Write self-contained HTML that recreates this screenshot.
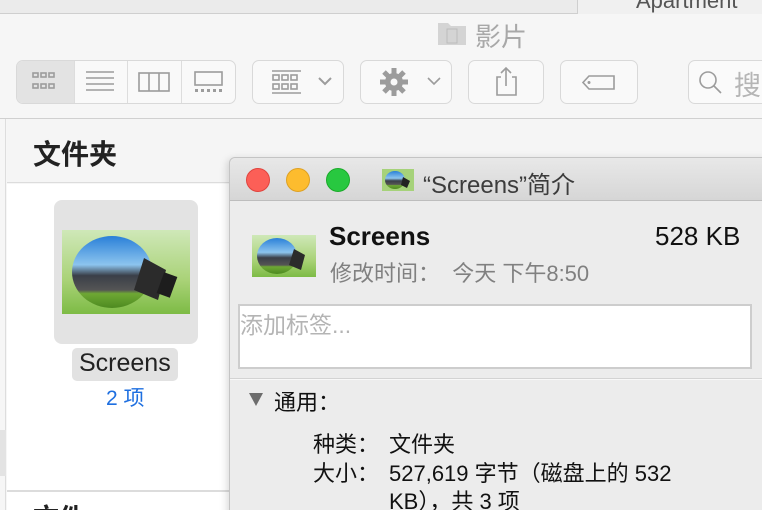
<!DOCTYPE html>
<html><head><meta charset="utf-8"><style>
*{margin:0;padding:0;box-sizing:border-box}
html,body{width:762px;height:510px;overflow:hidden}
body{position:relative;background:#f6f6f6;font-family:"Liberation Sans","Noto Sans CJK SC",sans-serif}
.a{position:absolute}
.btn{position:absolute;top:60px;height:44px;border:1px solid #d9d9d9;border-radius:7px;background:#f9f9f9}
.g{stroke:#9c9c9c;fill:none;stroke-width:1.6}
.t{position:absolute;white-space:nowrap}
</style></head><body>
<div class="a" style="left:0;top:0;width:762px;height:14px;background:#ebebeb;border-bottom:1px solid #cfcfcf"></div>
<div class="a" style="left:577px;top:0;width:1px;height:14px;background:#cfcfcf"></div>
<div class="a" style="left:578px;top:0;width:184px;height:14px;background:#f0f0f0;overflow:hidden"><div class="t" style="left:58px;top:-12px;font-size:22px;color:#555">Apartment</div></div>
<svg class="a" style="left:437px;top:20px" width="30" height="26"><path d="M1 3h10l3 3h15v19H1z" fill="#d4d4d4"/><rect x="10" y="9" width="10" height="14" fill="none" stroke="#bbb"/></svg>
<div class="t" style="left:475px;top:17px;font-size:26px;color:#a8a8a8">影片</div>
<div class="btn" style="left:16px;width:220px;overflow:hidden">
<div class="a" style="left:0;top:0;width:57px;height:44px;background:#e3e3e3"></div>
<div class="a" style="left:57px;top:0;width:1px;height:44px;background:#ddd"></div>
<div class="a" style="left:110px;top:0;width:1px;height:44px;background:#ddd"></div>
<div class="a" style="left:164px;top:0;width:1px;height:44px;background:#ddd"></div>
</div>
<svg class="a" style="left:16px;top:60px" width="220" height="44">
<g class="g" stroke-width="1.4"><rect x="17" y="13" width="5" height="4"/><rect x="25" y="13" width="5" height="4"/><rect x="33" y="13" width="5" height="4"/><rect x="17" y="24" width="5" height="4"/><rect x="25" y="24" width="5" height="4"/><rect x="33" y="24" width="5" height="4"/>
<path d="M70 12h28M70 18h28M70 24h28M70 30h28"/>
<rect x="123" y="13" width="30" height="18"/><path d="M133 13v18M143 13v18"/>
<rect x="179" y="12" width="27" height="13"/></g>
<g fill="#9c9c9c"><rect x="179" y="29" width="3" height="3"/><rect x="185" y="29" width="3" height="3"/><rect x="191" y="29" width="3" height="3"/><rect x="197" y="29" width="3" height="3"/><rect x="203" y="29" width="3" height="3"/></g>
</svg>
<div class="btn" style="left:252px;width:92px"></div>
<svg class="a" style="left:252px;top:60px" width="92" height="44"><g class="g" stroke-width="1.4"><path d="M20 11h29M20 33h29"/><rect x="21" y="15" width="6" height="5"/><rect x="30" y="15" width="6" height="5"/><rect x="39" y="15" width="6" height="5"/><rect x="21" y="24" width="6" height="5"/><rect x="30" y="24" width="6" height="5"/><rect x="39" y="24" width="6" height="5"/><path d="M67 18l6 6 6-6" stroke-width="2"/></g></svg>
<div class="btn" style="left:360px;width:92px"></div>
<svg class="a" style="left:360px;top:60px" width="92" height="44"><g fill="#9c9c9c"><circle cx="34" cy="22" r="9"/><g stroke="#9c9c9c" stroke-width="5"><path d="M34 8v28M20 22h28M24 12l20 20M44 12L24 32"/></g></g><circle cx="34" cy="22" r="3.5" fill="#f9f9f9"/><path class="g" stroke-width="2" d="M68 18l6 6 6-6"/></svg>
<div class="btn" style="left:468px;width:76px"></div>
<svg class="a" style="left:468px;top:60px" width="76" height="44"><path class="g" d="M33 17h-4v18h19V17h-4M38 8v18M33 13l5-5 5 5"/></svg>
<div class="btn" style="left:560px;width:78px"></div>
<svg class="a" style="left:560px;top:60px" width="78" height="44"><path class="g" d="M29 16h25v13H29l-6-6.5z"/><circle cx="29" cy="22.5" r="1.5" fill="#9c9c9c"/></svg>
<div class="btn" style="left:688px;width:90px;background:#fafafa"></div>
<svg class="a" style="left:696px;top:68px" width="30" height="30"><circle cx="12" cy="12" r="8" class="g" stroke-width="1.8"/><path d="M18 18l7 7" class="g" stroke-width="2"/></svg>
<div class="t" style="left:734px;top:64px;font-size:27px;color:#b5b5b5">搜</div>
<div class="a" style="left:0;top:118px;width:762px;height:1px;background:#d0d0d0"></div>
<div class="a" style="left:0;top:119px;width:6px;height:391px;background:#f6f6f6;border-right:1px solid #ddd"></div>
<div class="a" style="left:0;top:430px;width:6px;height:46px;background:#e3e3e3"></div>
<div class="a" style="left:7px;top:119px;width:755px;height:64px;background:#f5f5f5;border-bottom:1px solid #dcdcdc"></div>
<div class="t" style="left:33px;top:133px;font-size:28px;font-weight:bold;color:#222">文件夹</div>
<div class="a" style="left:7px;top:184px;width:755px;height:306px;background:#fff"></div>
<div class="a" style="left:7px;top:490px;width:755px;height:2px;background:#dcdcdc"></div>
<div class="a" style="left:7px;top:492px;width:755px;height:18px;background:#fff"></div>
<div class="a" style="left:54px;top:200px;width:144px;height:144px;background:#e3e3e3;border-radius:8px"></div>
<svg class="a" style="left:62px;top:230px" width="128" height="84"><defs><linearGradient id="s" x1="0" y1="0" x2="0" y2="1"><stop offset="0" stop-color="#cfe8b8"/><stop offset=".6" stop-color="#a9d277"/><stop offset="1" stop-color="#7dbb45"/></linearGradient><linearGradient id="b" x1="0" y1="0" x2="0" y2="1"><stop offset="0" stop-color="#2a80d8"/><stop offset=".4" stop-color="#8cc4ee"/><stop offset=".55" stop-color="#3a3f48"/><stop offset=".75" stop-color="#555"/><stop offset=".8" stop-color="#6ea834"/><stop offset="1" stop-color="#4d8a20"/></linearGradient></defs><rect width="128" height="84" fill="url(#s)"/><ellipse cx="50" cy="42" rx="40" ry="36" fill="url(#b)"/><path d="M82 28l22 12-8 30-24-10z" fill="#2b2b2b"/><rect x="98" y="44" width="14" height="22" fill="#1d1d1d" transform="rotate(20 105 55)"/></svg>
<div class="a" style="left:72px;top:348px;width:106px;height:33px;background:#e2e2e2;border-radius:5px"></div>
<div class="t" style="left:79px;top:349px;font-size:25px;color:#222">Screens</div>
<div class="t" style="left:106px;top:382px;font-size:21px;color:#1e6fe0">2 项</div>
<div class="t" style="left:33px;top:498px;font-size:26px;font-weight:bold;color:#222">文件</div>
<!-- info window -->
<div class="a" style="left:229px;top:157px;width:540px;height:360px;background:#ececec;border:1px solid #c4c4c4;border-radius:6px 0 0 0;box-shadow:-2px 2px 8px rgba(0,0,0,.15)"></div>
<div class="a" style="left:230px;top:158px;width:532px;height:43px;background:linear-gradient(#e8e8e8,#d6d6d6);border-bottom:1px solid #bdbdbd;border-radius:6px 0 0 0"></div>
<div class="a" style="left:246px;top:168px;width:24px;height:24px;border-radius:50%;background:#fc5f57;border:1px solid #e0443e"></div>
<div class="a" style="left:286px;top:168px;width:24px;height:24px;border-radius:50%;background:#fdbc2e;border:1px solid #dea123"></div>
<div class="a" style="left:326px;top:168px;width:24px;height:24px;border-radius:50%;background:#28c840;border:1px solid #1aab29"></div>
<svg class="a" style="left:382px;top:169px" width="32" height="22"><rect width="32" height="22" fill="#a6d27a"/><ellipse cx="13" cy="11" rx="10" ry="9" fill="url(#b)"/><path d="M21 8l7 4-3 7-6-3z" fill="#222"/></svg>
<div class="t" style="left:423px;top:165px;font-size:24px;color:#3c3c3c">“Screens”简介</div>
<svg class="a" style="left:252px;top:235px" width="64" height="42"><rect width="64" height="42" fill="url(#s)"/><ellipse cx="25" cy="21" rx="20" ry="18" fill="url(#b)"/><path d="M42 14l11 6-4 15-12-5z" fill="#2b2b2b"/></svg>
<div class="t" style="left:329px;top:221px;font-size:26px;font-weight:bold;color:#111">Screens</div>
<div class="t" style="left:655px;top:221px;font-size:26px;color:#111">528 KB</div>
<div class="t" style="left:330px;top:256px;font-size:22px;color:#808080">修改时间：&nbsp;&nbsp;今天 下午8:50</div>
<div class="a" style="left:238px;top:304px;width:514px;height:65px;background:#fff;border:2px solid #cdcdcd"></div>
<div class="t" style="left:240px;top:306px;font-size:23px;color:#b4b4b4">添加标签...</div>
<div class="a" style="left:230px;top:378px;width:532px;height:1px;background:#d3d3d3"></div>
<div class="a" style="left:230px;top:379px;width:532px;height:1px;background:#f8f8f8"></div>
<svg class="a" style="left:248px;top:391px" width="16" height="16"><path d="M1 2h14L8 15z" fill="#6d6d6d"/></svg>
<div class="t" style="left:274px;top:385px;font-size:22px;color:#111">通用：</div>
<div class="t" style="left:313px;top:427px;font-size:22px;color:#111">种类：</div>
<div class="t" style="left:389px;top:427px;font-size:22px;color:#111">文件夹</div>
<div class="t" style="left:313px;top:456px;font-size:22px;color:#111">大小：</div>
<div class="t" style="left:389px;top:456px;font-size:22px;color:#111">527,619 字节（磁盘上的 532</div>
<div class="t" style="left:389px;top:484px;font-size:22px;color:#111">KB），共 3 项</div>
</body></html>
